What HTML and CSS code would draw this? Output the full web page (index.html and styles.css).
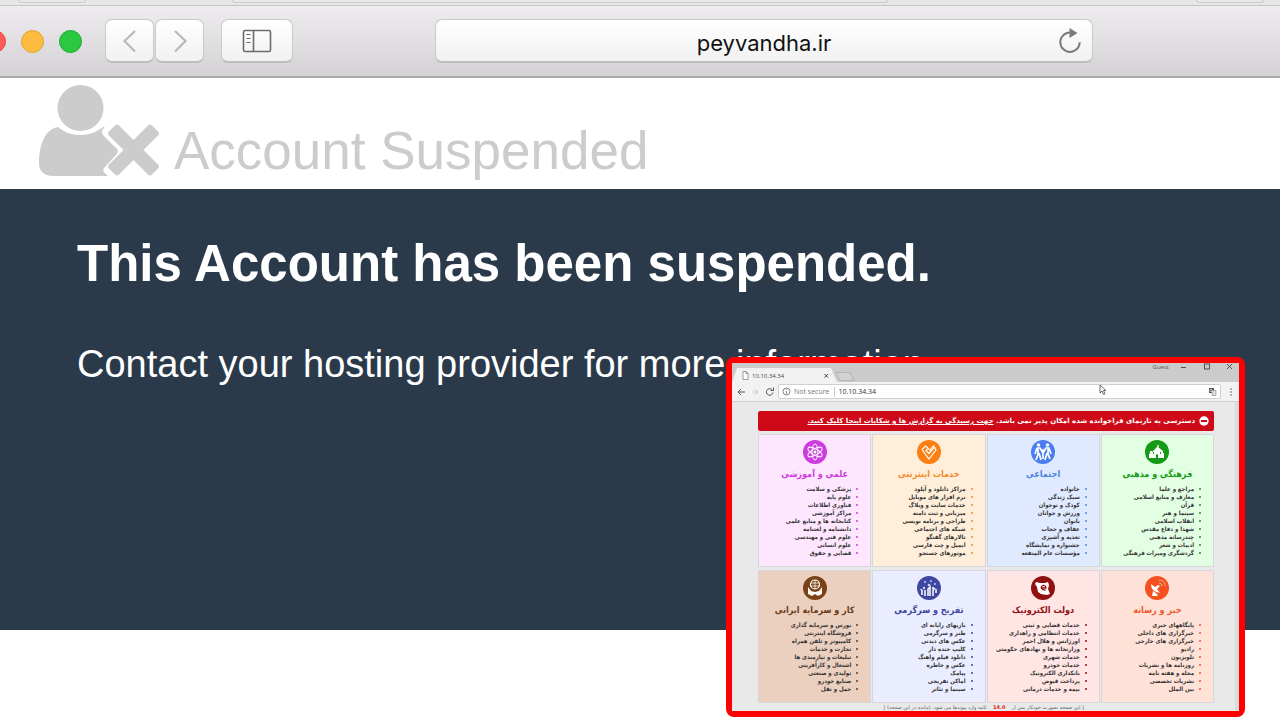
FILE: index.html
```
<!DOCTYPE html>
<html lang="en">
<head>
<meta charset="utf-8">
<title>Account Suspended</title>
<link rel="stylesheet" href="styles.css">
</head>
<body>
<div class="bookmarks"><span class="tab-end first"></span><span class="tab-end middle"></span><span class="tab-end last"></span></div>
<header class="toolbar">
  <div class="lights"><i class="light red"></i><i class="light yellow"></i><i class="light green"></i></div>
  <div class="nav">
    <button class="btn" aria-label="Back"><svg width="48" height="42" viewBox="0 0 48 42"><path d="M29 11 18.500 21 29 31.500" fill="none" stroke="#b9b9b9" stroke-width="2.200"/></svg></button>
    <button class="btn" aria-label="Forward"><svg width="48" height="42" viewBox="0 0 48 42"><path d="M19 11 29.500 21 19 31.500" fill="none" stroke="#b9b9b9" stroke-width="2.200"/></svg></button>
  </div>
  <button class="btn side" aria-label="Show sidebar"><svg width="30" height="24" viewBox="0 0 30 24" fill="none" stroke="#6b6b6b"><rect x="1.500" y="1.500" width="27" height="21" rx="1.500" stroke-width="1.600"/><path d="M11.500 1.500v21" stroke-width="1.600"/><path d="M4.500 5.500h4M4.500 9.500h4M4.500 13.500h4" stroke-width="1.200"/></svg></button>
  <div class="address">
    <input class="url" type="text" value="peyvandha.ir" aria-label="Address">
    <button class="reload" aria-label="Reload"><svg width="24" height="28" viewBox="0 0 24 28"><path d="M12 5.500A9.700 9.700 0 1 0 21.700 15.200" fill="none" stroke="#7b7b7b" stroke-width="2"/><path d="M11.500 1v10l8-5z" fill="#7b7b7b"/></svg></button>
  </div>
</header>
<main>
  <div class="status">
    <svg class="user" width="122" height="94" viewBox="0 0 122 94" fill="#ccc"><circle cx="42.500" cy="24" r="23"/><path d="M20 43c6 5 13 8 22 8s17-3 23-8l2 0c-4 3-4 6-1 9l11 11c4 4 4 5 0 9L67 83c-3 3-2 5 3 9H15C6 92 1 87 1 79 1 61 7 45 20 43z"/><path d="M81 41.500 95.500 56 110 41.500q2-2 4 0l6 6q2 2 0 4L105.500 66 120 80.500q2 2 0 4l-6 6q-2 2-4 0L95.500 76 81 90.500q-2 2-4 0l-6-6q-2-2 0-4L85.500 66 71 51.500q-2-2 0-4l6-6q2-2 4 0z"/></svg>
    <span>Account Suspended</span>
  </div>
  <section class="notice">
    <h1>This Account has been suspended.</h1>
    <p>Contact your hosting provider for more information.</p>
  </section>
</main>
<aside class="window">
  <div class="tabs">
    <svg class="tabshape" width="124" height="15" viewBox="0 0 124 15"><path d="M0 15 5 1h94l6 14z" fill="#f2f2f2"/><path d="M104 5.500h14l4 8h-14z" fill="#d2d2d2" stroke="#aaa" stroke-width=".7"/><path d="M11 4.500h3l2 2v6h-5zM14 4.500v2h2" fill="#fff" stroke="#777" stroke-width=".7"/><path d="m92.500 7 3.500 3.500m0-3.500-3.500 3.500" stroke="#444"/></svg>
    <span class="tabname">10.10.34.34</span>
    <span class="guest">Guest</span>
    <svg class="controls" width="62" height="10" viewBox="0 0 62 10" fill="none" stroke="#444" stroke-width=".9"><path d="M4 4.500h5M50 1l5 5m0-5-5 5"/><rect x="27.500" y="1" width="5" height="5"/></svg>
  </div>
  <div class="bar">
    <svg width="42" height="12" viewBox="0 0 42 12" fill="none" stroke="#555"><path d="M11 6H4m3-3L4 6l3 3"/><path d="M18 6h6m-3-3 3 3-3 3" stroke="#ccc"/><path d="M38 3.500a3.300 3.300 0 1 0 1 3M39.500 1.500v3h-3"/></svg>
    <div class="omni">
      <svg width="9" height="9" viewBox="0 0 9 9" fill="none" stroke="#666" stroke-width=".8"><circle cx="4.500" cy="4.500" r="3.500"/><path d="M4.500 4v3M4.500 2v1"/></svg>
      <span class="secure">Not secure</span><span class="host">10.10.34.34</span>
      <svg class="translate" width="9" height="9" viewBox="0 0 9 9"><path d="M1 1h5v5H1z" fill="#555"/><path d="M4 3.500h4v5H4z" fill="#ddd" stroke="#888" stroke-width=".6"/><circle cx="3" cy="3.500" r="1.200" fill="none" stroke="#fff" stroke-width=".6"/></svg>
    </div>
    <svg width="14" height="12" viewBox="0 0 14 12" fill="#555"><circle cx="6" cy="3" r=".8"/><circle cx="6" cy="6" r=".8"/><circle cx="6" cy="9" r=".8"/></svg>
  </div>
  <svg class="cursor" width="8" height="12" viewBox="0 0 8 12"><path d="M1 1v8l2-2 1.500 3.500 1.500-.7L4.500 6.500H7z" fill="#fff" stroke="#444" stroke-width=".8"/></svg>
  <div class="page" dir="rtl" lang="fa">
    <div class="banner"><svg width="10" height="10" viewBox="0 0 10 10"><circle cx="5" cy="5" r="4.700" fill="#fff"/><path d="M2 4h6v2H2z" fill="#cf0a18"/></svg><p>دسترسی به تارنمای فراخوانده شده امکان پذیر نمی باشد. <a href="#">جهت رسیدگی به گزارش ها و شکایات اینجا کلیک کنید.</a></p></div>
    <div class="cards">
      <section class="card religion">
        <svg width="24" height="24" viewBox="0 0 24 24"><circle cx="12" cy="12" r="12" fill="#149a14"/><path d="M4 18v-4l1-1v-2h2v1l5-5 1-3 1 3h-1l5 4v2h1v5h-6v-3q-1-2-2 0v3z" fill="#fff"/><path d="M8 12h1v2H8zM15 12h1v2h-1z" fill="#149a14"/></svg>
        <h2>فرهنگی و مذهبی</h2>
        <ul><li>مراجع و علما</li><li>معارف و منابع اسلامی</li><li>قرآن</li><li>سینما و هنر</li><li>انقلاب اسلامی</li><li>شهدا و دفاع مقدس</li><li>چندرسانه مذهبی</li><li>ادبیات و شعر</li><li>گردشگری ومیراث فرهنگی</li></ul>
      </section>
      <section class="card social">
        <svg width="24" height="24" viewBox="0 0 24 24"><circle cx="12" cy="12" r="12" fill="#4a7df0"/><circle cx="7.500" cy="5" r="1.800" fill="#fff"/><circle cx="16.500" cy="5" r="1.800" fill="#fff"/><circle cx="12" cy="10.500" r="1.300" fill="#fff"/><path d="M6 8h3l3 5 3-5h3l2 6M6 8l-2 6M7 9v5l-2 6M8 13l2 7M17 9v5l2 5M16 13l-2 7M12 13v6" fill="none" stroke="#fff" stroke-width="1.700"/></svg>
        <h2>اجتماعی</h2>
        <ul><li>خانواده</li><li>سبک زندگی</li><li>کودک و نوجوان</li><li>ورزش و جوانان</li><li>بانوان</li><li>عفاف و حجاب</li><li>تغذیه و آشپزی</li><li>جشنواره و نمایشگاه</li><li>مؤسسات عام المنفعه</li></ul>
      </section>
      <section class="card internet">
        <svg width="24" height="24" viewBox="0 0 24 24"><circle cx="12" cy="12" r="12" fill="#fb7f12"/><path d="M5 9.500 12 19 19 10l-1.500-3L12 13.500 9 10.500 11 8.500l2 1.500 4-5M5 9.500 8.500 6l2.500 2" fill="none" stroke="#fff" stroke-width="1.200"/></svg>
        <h2>خدمات اینترنتی</h2>
        <ul><li>مراکز دانلود و آپلود</li><li>نرم افزار های موبایل</li><li>خدمات سایت و وبلاگ</li><li>میزبانی و ثبت دامنه</li><li>طراحی و برنامه نویسی</li><li>شبکه های اجتماعی</li><li>تالارهای گفتگو</li><li>ایمیل و چت فارسی</li><li>موتورهای جستجو</li></ul>
      </section>
      <section class="card science">
        <svg width="24" height="24" viewBox="0 0 24 24"><circle cx="12" cy="12" r="12" fill="#cc3ddd"/><g fill="none" stroke="#fff" stroke-width=".9"><ellipse cx="12" cy="12" rx="3" ry="8"/><ellipse cx="12" cy="12" rx="3" ry="8" transform="rotate(60 12 12)"/><ellipse cx="12" cy="12" rx="3" ry="8" transform="rotate(120 12 12)"/></g><circle cx="12" cy="12" r="1.500" fill="#fff"/></svg>
        <h2>علمی و آموزشی</h2>
        <ul><li>پزشکی و سلامت</li><li>علوم پایه</li><li>فناوری اطلاعات</li><li>مراکز آموزشی</li><li>کتابخانه ها و منابع علمی</li><li>دانشنامه و لغتنامه</li><li>علوم فنی و مهندسی</li><li>علوم انسانی</li><li>قضایی و حقوق</li></ul>
      </section>
      <section class="card news">
        <svg width="24" height="24" viewBox="0 0 24 24"><circle cx="12" cy="12" r="12" fill="#f4511e"/><path d="M6 8q0 8 9 9l-3-4 3-3-2-1-3 2zM8 15l-1 5h6l-2-3" fill="#fff"/><path d="M14 7q3 0 3 3M14 4q6 0 6 6" fill="none" stroke="#ffb29c"/></svg>
        <h2>خبر و رسانه</h2>
        <ul><li>پایگاههای خبری</li><li>خبرگزاری های داخلی</li><li>خبرگزاری های خارجی</li><li>رادیو</li><li>تلویزیون</li><li>روزنامه ها و نشریات</li><li>مجله و هفته نامه</li><li>نشریات تخصصی</li><li>بین الملل</li></ul>
      </section>
      <section class="card egov">
        <svg width="24" height="24" viewBox="0 0 24 24"><circle cx="12" cy="12" r="12" fill="#921010"/><path d="m5 6 4 1 5 0 3-1 1 3-1 4 2 5-3 1-6-1-3-2-1-5-2-3z" fill="#fff"/><path d="M10 12h5q-.500-3-3-2.500c-3 1-2 5 2.500 4.500" fill="none" stroke="#921010" stroke-width="1.300"/></svg>
        <h2>دولت الکترونیک</h2>
        <ul><li>خدمات قضایی و ثبتی</li><li>خدمات انتظامی و راهداری</li><li>اورژانس و هلال احمر</li><li>وزارتخانه ها و نهادهای حکومتی</li><li>خدمات شهری</li><li>خدمات خودرو</li><li>بانکداری الکترونیک</li><li>پرداخت قبوض</li><li>بیمه و خدمات درمانی</li></ul>
      </section>
      <section class="card fun">
        <svg width="24" height="24" viewBox="0 0 24 24"><circle cx="12" cy="12" r="12" fill="#3f479f"/><path d="M5 19v-4l-1-2M8 20v-6M11 20v-7l2-2v9M16 20v-6l2-2M19 17v-4" stroke="#fff" stroke-width="1.500" fill="none"/><g fill="#cfd4ff"><circle cx="7" cy="12" r="1.200"/><circle cx="12" cy="9" r="1.300"/><circle cx="16" cy="12" r="1.200"/><circle cx="8" cy="6" r=".9"/><circle cx="14" cy="5" r=".9"/><circle cx="18" cy="8" r=".9"/></g></svg>
        <h2>تفریح و سرگرمی</h2>
        <ul><li>بازیهای رایانه ای</li><li>طنز و سرگرمی</li><li>عکس های دیدنی</li><li>کلیپ خنده دار</li><li>دانلود فیلم واهنگ</li><li>عکس و خاطره</li><li>پیامک</li><li>اماکن تفریحی</li><li>سینما و تئاتر</li></ul>
      </section>
      <section class="card work">
        <svg width="24" height="24" viewBox="0 0 24 24"><circle cx="12" cy="12" r="12" fill="#7a4216"/><circle cx="12" cy="8.500" r="4.500" fill="none" stroke="#fff" stroke-width="1.200"/><path d="M12 4v9M8 7h8M8 10h8" stroke="#fff" stroke-width=".8"/><path d="M5 11v7l4 2 3-2 3 2 4-2v-7l-3 4-4 1-4-1z" fill="#fff"/></svg>
        <h2>کار و سرمایه ایرانی</h2>
        <ul><li>بورس و سرمایه گذاری</li><li>فروشگاه اینترنتی</li><li>کامپیوتر و تلفن همراه</li><li>تجارت و خدمات</li><li>تبلیغات و نیازمندی ها</li><li>اشتغال و کارآفرینی</li><li>تولیدی و صنعتی</li><li>صنایع خودرو</li><li>حمل و نقل</li></ul>
      </section>
    </div>
    <p class="redirect">[ این صفحه بصورت خودکار پس از <b>14.0</b> ثانیه وارد پیوندها می شود. (مانده در این صفحه) ]</p>
  </div>
</aside>
</body>
</html>
```

FILE: styles.css
```
* { box-sizing: border-box; }
body { margin: 0; min-height: 100vh; background: #fff; font-family: "Liberation Sans", Arial, sans-serif; position: relative; }
h1, h2, p, ul { margin: 0; padding: 0; }
button { padding: 0; font: inherit; }
svg { display: block; flex: none; }

.bookmarks { height: 6px; background: #e8e7e8; border-bottom: 1px solid #c6c4c6; display: flex; align-items: flex-start; }
.tab-end { height: 3px; border: 1px solid #cfcdcf; border-top: 0; border-radius: 0 0 4px 4px; }
.first { width: 68px; margin-left: 18px; }
.middle { width: 656px; margin-left: 146px; }
.last { width: 68px; margin-left: auto; margin-right: 16px; }

.toolbar { height: 72px; display: flex; align-items: center; padding-right: 187px; background: linear-gradient(#efecef, #d5d2d5); border-bottom: 2px solid #aaa8aa; }
.lights { display: flex; gap: 15px; margin-left: -17px; overflow: hidden; }
.light { width: 23px; height: 23px; border-radius: 50%; border: 1px solid; }
.red { background: #fc5b57; border-color: #e2463f; }
.yellow { background: #fdbc40; border-color: #e0a033; }
.green { background: #2ac940; border-color: #22a935; }
.nav { display: flex; gap: 1px; margin-left: 23px; }
.btn { display: flex; align-items: center; justify-content: center; width: 49px; height: 44px; border: 1px solid #cac8ca; border-bottom: 2px solid #bfbdbf; border-radius: 7px; background: linear-gradient(#fff, #f1f1f1); }
.side { width: 72px; margin-left: 17px; }
.address { flex: 1; min-width: 0; height: 44px; margin-left: 142px; display: grid; grid-template-columns: 44px 1fr 44px; align-items: center; border: 1px solid #cac8ca; border-bottom: 2px solid #bfbdbf; border-radius: 7px; background: linear-gradient(#fff, #f1f1f1); }
.url { grid-column: 2; width: 100%; min-width: 0; border: 0; padding: 4px 0 0; background: none; text-align: center; color: #111; font: 22px/32px Inter, sans-serif; outline: 0; }
.reload { border: 0; background: none; justify-self: center; }

.status { height: 111px; padding: 6px 38px 0; display: flex; gap: 14px; color: #ccc; font-size: 53px; line-height: 60px; }
.status span { margin-top: 37px; white-space: nowrap; }
.notice { min-height: 441px; padding: 46px 77px; background: #2b3a4a; color: #fff; }
.notice h1 { font-size: 51px; line-height: 58px; }
.notice p { margin-top: 49px; font-size: 38px; line-height: 44px; }

.window { position: absolute; top: 357px; right: 35px; width: 519px; border: 6px solid #fe0000; border-radius: 8px; background: #e9e9e9; font-family: "Open Sans", "DejaVu Sans", sans-serif; }
.tabs { height: 19px; display: flex; background: #cbcbcb; position: relative; }
.tabshape { margin-top: 4px; }
.tabname { position: absolute; left: 20px; top: 8px; font-size: 6px; line-height: 10px; color: #444; }
.guest { margin-left: auto; font-size: 6px; line-height: 8px; color: #555; }
.controls { margin-left: 8px; }
.bar { height: 20px; display: flex; align-items: center; gap: 4px; padding-left: 2px; background: #f2f2f2; border-bottom: 1px solid #cfcfcf; }
.omni { flex: 1; height: 15px; display: flex; align-items: center; gap: 3px; padding: 0 3px; background: #fff; border: 1px solid #d0d0d0; border-radius: 2px; font-size: 7px; line-height: 10px; }
.bar > svg + .omni { margin-left: -2px; }
.secure { color: #777; padding-right: 4px; border-right: 1px solid #ccc; }
.host { color: #333; margin-left: 1px; }
.translate { margin-left: auto; }
.cursor { position: absolute; left: 367px; top: 21px; }

.page { padding: 9px 21px 0 26px; background: #e9e9e9; border-right: 4px solid #dcdcdc; font-family: "DejaVu Sans Condensed", "DejaVu Sans", sans-serif; }
.banner { height: 20px; display: flex; align-items: center; gap: 4px; padding: 0 5px; border-radius: 2px; background: #cf0a18; color: #fff; font-family: "DejaVu Sans", sans-serif; font-size: 7px; font-weight: bold; line-height: 10px; white-space: nowrap; }
.banner a { color: inherit; }
.cards { display: grid; grid-template-columns: repeat(4, minmax(0, 1fr)); gap: 3px 1px; margin-top: 3px; }
.card { height: 133px; padding-top: 5px; border: 1px solid #d6d6dc; color: #333; }
.card > svg { margin: 0 auto; }
.card h2 { margin-top: 1px; font-size: 9px; line-height: 18px; text-align: center; white-space: nowrap; }
.card ul { list-style: none; padding-right: 12px; margin-top: 2px; }
.card li { display: flex; gap: 5px; font-size: 6px; line-height: 8px; font-weight: bold; white-space: nowrap; }
.card li::before { content: ""; width: 2px; height: 2px; margin-top: 3px; border-radius: 50%; background: currentColor; }
.religion { background: #e2ffe3; } .religion h2, .religion li::before { color: #149a14; }
.social { background: #dfe9ff; } .social h2, .social li::before { color: #4a86e0; }
.internet { background: #ffeeda; } .internet h2, .internet li::before { color: #f58a2a; }
.science { background: #ffe6ff; } .science h2, .science li::before { color: #cc3ddd; }
.news { background: #ffe2d7; } .news h2, .news li::before { color: #f0582a; }
.egov { background: #ffe5e4; } .egov h2, .egov li::before { color: #921010; }
.fun { background: #eaedff; } .fun h2, .fun li::before { color: #3f479f; }
.work { background: #ebd0bf; } .work h2, .work li::before { color: #6d3b18; }
.redirect { padding-right: 130px; font-family: "DejaVu Sans", sans-serif; font-size: 5px; line-height: 8px; color: #666; white-space: nowrap; }
.redirect b { color: #e02020; margin: 0 5px; }
```
